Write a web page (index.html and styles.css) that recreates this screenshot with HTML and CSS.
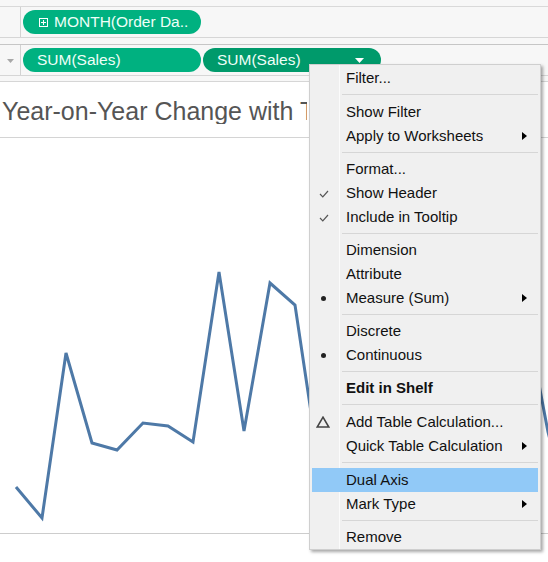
FILE: index.html
```html
<!DOCTYPE html>
<html>
<head>
<meta charset="utf-8">
<link rel="stylesheet" href="styles.css">
</head>
<body>
<div class="page">
  <div class="shelves">
    <div class="gap-top"></div>
    <div class="row">
      <div class="row-label"></div>
      <div class="pills">
        <div class="pill">
          <svg class="plus" width="9" height="9" viewBox="0 0 9 9"><rect x="0.5" y="0.5" width="8" height="8" fill="none" stroke="#fff" stroke-width="1"/><path d="M4.5 2v5M2 4.5h5" stroke="#fff" stroke-width="1"/></svg>
          <span>MONTH(Order Da..</span>
        </div>
      </div>
    </div>
    <div class="gap-mid"></div>
    <div class="row row2">
      <div class="row-label"><svg width="7" height="4" viewBox="0 0 7 4"><path d="M0 0h7L3.5 4z" fill="#a8a8a8"/></svg></div>
      <div class="pills">
        <div class="pill"><span>SUM(Sales)</span></div>
        <div class="pill dark"><span>SUM(Sales)</span>
          <svg class="drop" width="9" height="5" viewBox="0 0 9 5"><path d="M0 0h9L4.5 5z" fill="#fff"/></svg>
        </div>
      </div>
    </div>
    <div class="gap-bot"></div>
  </div>
  <div class="title"><span class="title-text">Year-on-Year Change with Tableau</span></div>
  <div class="chart">
    <svg width="548" height="395" viewBox="0 139 548 395">
      <polyline fill="none" stroke="#4e79a7" stroke-width="3" stroke-linejoin="miter" points="16,488 42,519 66,354 92,444 117,451 143,424 168,427 193,443 219,273 244,432 270,284 295,306 321,480 346,380 372,420 397,330 422,360 447,300 472,390 497,350 521,290 548,433 560,480"/>
    </svg>
  </div>

  <div class="menu">
    <div class="item">Filter...</div>
    <div class="sep wide"></div>
    <div class="item">Show Filter</div>
    <div class="item sub">Apply to Worksheets</div>
    <div class="sep"></div>
    <div class="item">Format...</div>
    <div class="item"><svg class="check" width="10" height="8" viewBox="0 0 10 8"><polyline points="1,4 3.8,6.8 9,1" fill="none" stroke="#555" stroke-width="1.2"/></svg>Show Header</div>
    <div class="item"><svg class="check" width="10" height="8" viewBox="0 0 10 8"><polyline points="1,4 3.8,6.8 9,1" fill="none" stroke="#555" stroke-width="1.2"/></svg>Include in Tooltip</div>
    <div class="sep"></div>
    <div class="item">Dimension</div>
    <div class="item">Attribute</div>
    <div class="item sub"><span class="bullet"></span>Measure (Sum)</div>
    <div class="sep"></div>
    <div class="item">Discrete</div>
    <div class="item"><span class="bullet"></span>Continuous</div>
    <div class="sep"></div>
    <div class="item bold">Edit in Shelf</div>
    <div class="sep wide"></div>
    <div class="item"><svg class="delta" width="14" height="12" viewBox="0 0 14 12"><path d="M7 1.2L12.8 11H1.2z" fill="none" stroke="#444" stroke-width="1.6" stroke-linejoin="miter"/></svg>Add Table Calculation...</div>
    <div class="item sub">Quick Table Calculation</div>
    <div class="sep wide"></div>
    <div class="item hl">Dual Axis</div>
    <div class="item sub">Mark Type</div>
    <div class="sep"></div>
    <div class="item">Remove</div>
  </div>
</div>
</body>
</html>
```

FILE: styles.css
```css
html, body {
  margin: 0;
  padding: 0;
  background: #ffffff;
}
.page {
  position: relative;
  width: 548px;
  height: 562px;
  overflow: hidden;
  font-family: "Liberation Sans", Arial, sans-serif;
}
.shelves {
  background: #f7f7f7;
}
.gap-top {
  height: 6px;
  border-bottom: 1px solid #d9d9d9;
}
.row {
  display: flex;
  height: 30px;
  border-bottom: 1px solid #d6d6d6;
}
.row2 {
  border-top: 1px solid #c6c6c6;
}
.row-label {
  width: 21px;
  border-right: 1px solid #d2d2d2;
  display: flex;
  align-items: center;
  justify-content: center;
  padding-top: 2px;
  box-sizing: border-box;
}
.gap-mid {
  height: 6px;
}
.gap-bot {
  height: 5px;
  border-bottom: 1px solid #d6d6d6;
}
.pills {
  display: flex;
  align-items: center;
  gap: 2px;
  padding-left: 2px;
}
.pill {
  position: relative;
  display: flex;
  align-items: center;
  width: 178px;
  height: 24px;
  box-sizing: border-box;
  border-radius: 12px;
  background: #00b180;
  color: #effff8;
  font-size: 15.5px;
  padding-left: 14px;
  white-space: nowrap;
}
.pill.dark {
  background: #009a6b;
}
.plus {
  margin-left: 2px;
  margin-right: 6px;
}
.drop {
  position: absolute;
  left: 152px;
  top: 10px;
}
.title {
  height: 56px;
  box-sizing: border-box;
  padding-top: 4px;
  padding-left: 2px;
  display: flex;
  align-items: center;
  font-size: 25px;
  line-height: 1;
  color: #555555;
  white-space: nowrap;
  border-bottom: 1px solid #d4d4d4;
}
.title-text {
  display: block;
  width: 305px;
  overflow: hidden;
}
.chart {
  height: 395px;
  border-bottom: 1px solid #cdcdcd;
}
.chart svg {
  display: block;
}
.menu {
  position: absolute;
  left: 309px;
  top: 64px;
  width: 232px;
  box-sizing: border-box;
  background: #f0f0f0;
  border: 1px solid #cfcfcf;
  box-shadow: 2px 2px 3px rgba(0, 0, 0, 0.35);
  padding: 1px 0 0 0;
}
.menu::before {
  content: "";
  position: absolute;
  left: 29px;
  top: 0;
  bottom: 0;
  width: 1px;
  background: #fbfbfb;
}
.item {
  position: relative;
  height: 24px;
  line-height: 24px;
  padding-left: 36px;
  font-size: 15px;
  color: #111111;
  white-space: nowrap;
}
.item.bold {
  font-weight: bold;
}
.item.hl {
  background: #91c9f7;
  margin: 0 2px;
  padding-left: 34px;
}
.item.sub::after {
  content: "";
  position: absolute;
  right: 13px;
  top: 8px;
  border-style: solid;
  border-width: 4px 0 4px 5px;
  border-color: transparent transparent transparent #000;
}
.sep {
  position: relative;
  height: 9px;
}
.sep.wide {
  height: 10px;
}
.sep::after {
  content: "";
  position: absolute;
  left: 32px;
  right: 2px;
  top: 4px;
  height: 1px;
  background: #d6d6d6;
}
.check {
  position: absolute;
  left: 9px;
  top: 9px;
}
.bullet {
  position: absolute;
  left: 11px;
  top: 10px;
  width: 5px;
  height: 5px;
  border-radius: 50%;
  background: #222;
}
.delta {
  position: absolute;
  left: 6px;
  top: 6px;
}
```
